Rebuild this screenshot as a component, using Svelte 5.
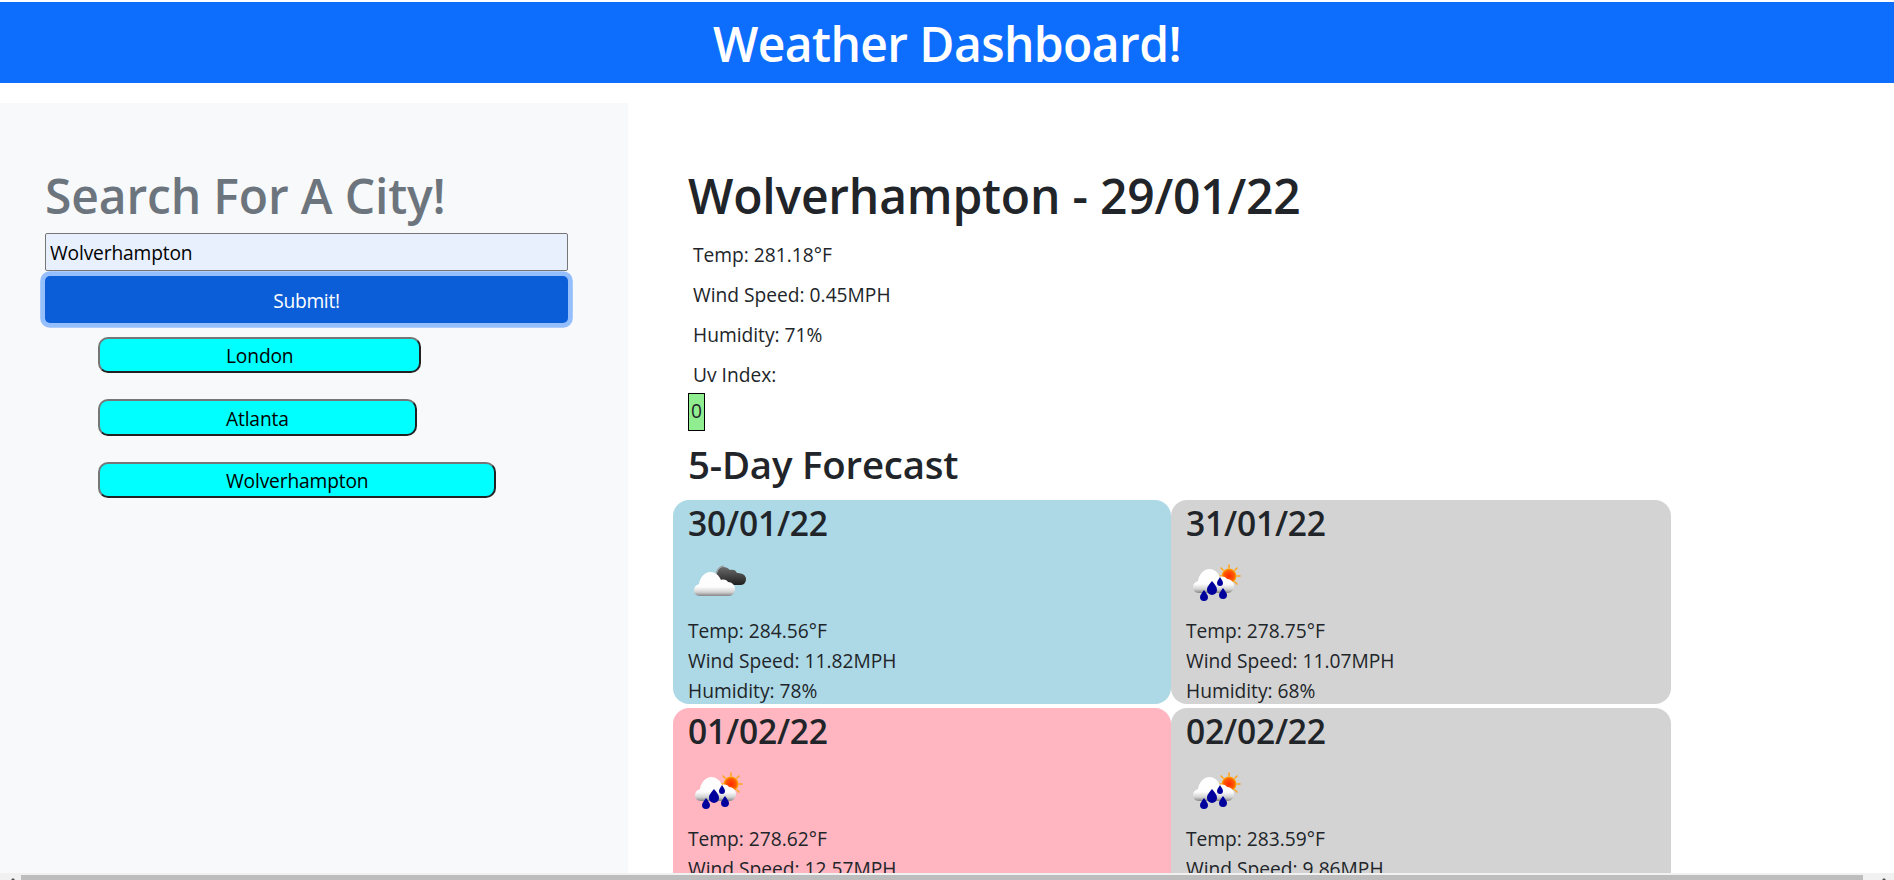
<script>
  const current = ["Temp: 281.18°F", "Wind Speed: 0.45MPH", "Humidity: 71%", "Uv Index:"];
  const cities = ["London", "Atlanta", "Wolverhampton"];
  const forecast = [
    { date: "30/01/22", icon: "cloud", bg: "lightblue", temp: "284.56", wind: "11.82", hum: "78" },
    { date: "31/01/22", icon: "rain", bg: "lightgray", temp: "278.75", wind: "11.07", hum: "68" },
    { date: "01/02/22", icon: "rain", bg: "lightpink", temp: "278.62", wind: "12.57", hum: "80" },
    { date: "02/02/22", icon: "rain", bg: "lightgray", temp: "283.59", wind: "9.86", hum: "75" }
  ];
</script>

{#snippet whiteCloud(x, y)}
  <g transform="translate({x} {y})">
    <path d="M6 25c-4 0-6-3-6-6 0-3 2-5 5-6 1-7 6-12 11-12 5 0 9 3 11 8 3-1 6 0 7 2 4 0 7 3 7 7 0 4-3 7-6 7z" fill="url(#cloudFill)" />
  </g>
{/snippet}

{#snippet weatherIcon(kind)}
  <svg class="icon" width="60" height="60" viewBox="0 0 60 60">
    <defs>
      <linearGradient id="cloudFill" x1="0" y1="0" x2="0" y2="1">
        <stop offset="0" stop-color="#fff" />
        <stop offset="0.62" stop-color="#fdfdfd" />
        <stop offset="0.84" stop-color="#d2d2d2" />
        <stop offset="1" stop-color="#858585" />
      </linearGradient>
      <linearGradient id="darkFill" x1="0" y1="0" x2="0" y2="1">
        <stop offset="0" stop-color="#6a6a6a" />
        <stop offset="1" stop-color="#1f1f1f" />
      </linearGradient>
      <radialGradient id="sunFill">
        <stop offset="0" stop-color="#ff2a00" />
        <stop offset="0.7" stop-color="#ff5a00" />
        <stop offset="1" stop-color="#ffb000" />
      </radialGradient>
    </defs>
    {#if kind === "cloud"}
      <path d="M29 22c0-5 3-8 6-8 3 0 5 1 7 3 3-1 6 0 7 3 5 0 9 2 9 6 0 3-2 6-5 6H38c-4 0-9-5-9-10z" fill="url(#darkFill)" />
      <path d="M28 23c0-5 3-10 8-10" fill="none" stroke="#9a9a9a" stroke-width="1.2" />
      {@render whiteCloud(6, 18)}
    {:else}
      <g stroke="#ffa51f" stroke-width="1.6" stroke-linecap="round">
        <path d="M43 12v3M43 31v3M32 23h3M51 23h3M35 15l2 2M49 29l2 2M51 15l-2 2M35 31l2-2" />
      </g>
      <circle cx="43" cy="23" r="7.5" fill="url(#sunFill)" />
      {@render whiteCloud(7, 15)}
      <g fill="#00009c">
        <path d="M18 37c-2 3-4 5-4 7a4 4 0 0 0 8 0c0-2-2-4-4-7z" />
        <path d="M26 28c-2 3-5 5-5 9a5 5 0 0 0 10 0c0-4-3-6-5-9z" />
        <path d="M34 24c-1 2-3 4-3 6a3 3 0 0 0 6 0c0-2-2-4-3-6z" />
        <path d="M37 35c-2 3-4 5-4 7a4 4 0 0 0 8 0c0-2-2-4-4-7z" />
      </g>
    {/if}
  </svg>
{/snippet}

<header class="banner">
  <h1>Weather Dashboard!</h1>
</header>

<div class="page">
  <aside class="sidebar">
    <h2 class="search-title">Search For A City!</h2>
    <input class="search" type="text" value="Wolverhampton" />
    <button class="submit">Submit!</button>
    <div class="history">
      {#each cities as city}
        <button class="city">{city}</button>
      {/each}
    </div>
  </aside>

  <main class="content">
    <h1 class="title">Wolverhampton - 29/01/22</h1>
    <div class="today">
      {#each current as line}
        <p>{line}</p>
      {/each}
    </div>
    <span class="uv">0</span>
    <h2 class="subtitle">5-Day Forecast</h2>
    <div class="cards">
      {#each forecast as day}
        <article class="card" style="background-color: {day.bg}">
          <h3>{day.date}</h3>
          {@render weatherIcon(day.icon)}
          <p>Temp: {day.temp}°F</p>
          <p>Wind Speed: {day.wind}MPH</p>
          <p>Humidity: {day.hum}%</p>
        </article>
      {/each}
    </div>
  </main>
</div>

<div class="scrollbar">
  <span class="arrow left"></span>
  <span class="thumb"></span>
  <span class="arrow right"></span>
</div>

<style>
  :global(body) {
    font-family: "Open Sans", "Noto Sans", sans-serif;
    font-size: 19.2px;
    line-height: 1.5;
    color: #212529;
    height: 880px;
    overflow: hidden;
    background: #fff;
  }

  h1,
  h2,
  h3,
  p {
    margin: 0;
  }

  .banner {
    margin-top: 2px;
    height: 81px;
    box-sizing: border-box;
    padding-top: 2px;
    background-color: #0d6efd;
    color: #fff;
    display: flex;
    align-items: center;
    justify-content: center;
  }

  .banner h1 {
    font-size: 48px;
    font-weight: 600;
    letter-spacing: -0.6px;
    line-height: 1.2;
  }

  .page {
    display: flex;
    margin-top: 20px;
    height: 777px;
  }

  .sidebar {
    width: 628px;
    box-sizing: border-box;
    background-color: #f8f9fa;
    padding: 64px 60px 0 45px;
    flex-shrink: 0;
  }

  .search-title {
    font-size: 48px;
    font-weight: 600;
    line-height: 1.2;
    letter-spacing: -0.15px;
    color: #6c757d;
    margin-bottom: 8.4px;
  }

  .search {
    display: block;
    width: 523px;
    height: 38px;
    box-sizing: border-box;
    border: 1px solid #767676;
    border-radius: 2px;
    background-color: #e8f0fe;
    padding: 2px 4px 0;
    font: inherit;
    letter-spacing: -0.15px;
    color: #000;
  }

  .submit {
    display: block;
    width: 523px;
    height: 47px;
    margin-top: 5px;
    padding-top: 4px;
    border: none;
    border-radius: 5px;
    background-color: #0b5ed7;
    box-shadow: 0 0 0 4.8px rgba(49, 132, 253, 0.5);
    color: #fff;
    font: inherit;
    letter-spacing: -0.3px;
  }

  .history {
    margin: 14px 0 0 53px;
    display: flex;
    flex-direction: column;
    align-items: flex-start;
    gap: 26px;
  }

  .city {
    height: 36.4px;
    padding: 3px 126px 0;
    border: 2px solid;
    border-color: #767676 #222 #222 #767676;
    border-radius: 10px;
    background-color: cyan;
    color: #000;
    font: inherit;
    letter-spacing: -0.15px;
  }

  .content {
    padding: 64px 0 0 45px;
    flex: 1;
  }

  .title {
    font-size: 48px;
    font-weight: 600;
    line-height: 1.2;
    letter-spacing: -0.2px;
    margin-left: 15px;
    margin-bottom: 16.8px;
  }

  .today {
    margin-left: 20px;
    display: flex;
    flex-direction: column;
    gap: 11.2px;
  }

  .uv {
    display: table;
    margin: 2.6px 0 0 15px;
    padding: 3.5px 2px;
    border: 1.5px solid #000;
    background-color: lightgreen;
    line-height: 1.5;
  }

  .subtitle {
    font-size: 38.4px;
    font-weight: 600;
    line-height: 1.2;
    letter-spacing: -0.2px;
    margin: 10px 0 13px 15px;
  }

  .cards {
    display: grid;
    grid-template-columns: 498px 500px;
    gap: 4px 0;
  }

  .card {
    height: 204px;
    box-sizing: border-box;
    border-radius: 16px;
    padding: 3px 15px 0;
    line-height: 30px;
  }

  .card h3 {
    font-size: 33.6px;
    font-weight: 600;
    line-height: 1.2;
    letter-spacing: -0.2px;
    margin-bottom: 9.6px;
  }

  .icon {
    display: block;
    margin-bottom: 3px;
    filter: blur(0.4px);
  }

  .scrollbar {
    position: fixed;
    left: 0;
    right: 0;
    bottom: 0;
    height: 7px;
    background-color: #f1f1f1;
  }

  .thumb {
    position: absolute;
    left: 21px;
    width: 1842px;
    top: 2px;
    height: 5px;
    background-color: #bdbdbd;
  }

  .arrow {
    position: absolute;
    bottom: 0;
    width: 0;
    height: 0;
    border-style: solid;
    border-color: transparent;
    border-width: 0 2px 2px;
    border-bottom-color: #505050;
  }

  .left {
    left: 11px;
  }

  .right {
    right: 8px;
  }
</style>
